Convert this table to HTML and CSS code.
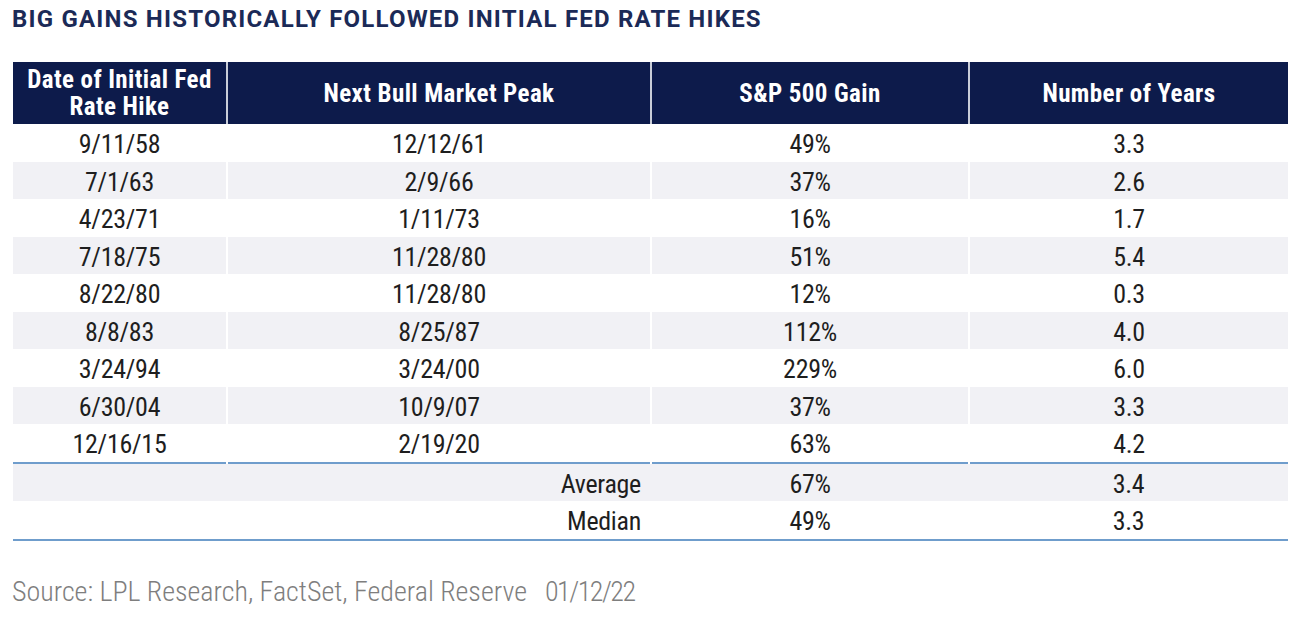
FILE: index.html
```html
<!DOCTYPE html>
<html>
<head>
<meta charset="utf-8">
<link rel="stylesheet" href="styles.css">
</head>
<body>
<div class="page">
  <h1 class="title">BIG GAINS HISTORICALLY FOLLOWED INITIAL FED RATE HIKES</h1>
  <table class="data">
    <colgroup>
      <col class="c1"><col class="c2"><col class="c3"><col class="c4">
    </colgroup>
    <thead>
      <tr>
        <th>Date of Initial Fed<br>Rate Hike</th>
        <th>Next Bull Market Peak</th>
        <th>S&amp;P 500 Gain</th>
        <th>Number of Years</th>
      </tr>
    </thead>
    <tbody>
      <tr><td>9/11/58</td><td>12/12/61</td><td>49%</td><td>3.3</td></tr>
      <tr class="alt"><td>7/1/63</td><td>2/9/66</td><td>37%</td><td>2.6</td></tr>
      <tr><td>4/23/71</td><td>1/11/73</td><td>16%</td><td>1.7</td></tr>
      <tr class="alt"><td>7/18/75</td><td>11/28/80</td><td>51%</td><td>5.4</td></tr>
      <tr><td>8/22/80</td><td>11/28/80</td><td>12%</td><td>0.3</td></tr>
      <tr class="alt"><td>8/8/83</td><td>8/25/87</td><td>112%</td><td>4.0</td></tr>
      <tr><td>3/24/94</td><td>3/24/00</td><td>229%</td><td>6.0</td></tr>
      <tr class="alt"><td>6/30/04</td><td>10/9/07</td><td>37%</td><td>3.3</td></tr>
      <tr><td>12/16/15</td><td>2/19/20</td><td>63%</td><td>4.2</td></tr>
    </tbody>
    <tfoot>
      <tr class="alt summary first"><td></td><td class="label">Average</td><td>67%</td><td>3.4</td></tr>
      <tr class="summary last"><td></td><td class="label">Median</td><td>49%</td><td>3.3</td></tr>
    </tfoot>
  </table>
  <p class="source">Source: LPL Research, FactSet, Federal Reserve<span class="date">01/12/22</span></p>
</div>
</body>
</html>
```

FILE: styles.css
```css
html, body {
  margin: 0;
  padding: 0;
  background: #ffffff;
}

.page {
  padding: 0 19px 0 13px;
  font-family: "Roboto", "Liberation Sans", sans-serif;
  font-stretch: 75%;
}

.title {
  margin: 0 0 0 -1px;
  padding-top: 5px;
  height: 62px;
  box-sizing: border-box;
  font-size: 24px;
  line-height: 28px;
  font-weight: 700;
  font-stretch: 100%;
  letter-spacing: 1.2px;
  color: #1b2a57;
}

.data {
  width: 1275px;
  border-collapse: collapse;
  table-layout: fixed;
}

.c1 { width: 214px; }
.c2 { width: 424px; }
.c3 { width: 318px; }
.c4 { width: 319px; }

.data th {
  height: 62px;
  padding: 0;
  background: #0d1b4b;
  color: #ffffff;
  font-size: 25px;
  font-weight: 700;
  letter-spacing: 0.4px;
  line-height: 27px;
  text-align: center;
  vertical-align: middle;
  border-right: 2px solid #c9cdd8;
}

.data th:last-child { border-right: none; }

.data td {
  height: 34.5px;
  padding: 3px 0 0;
  font-size: 26px;
  line-height: 30px;
  letter-spacing: -0.3px;
  color: #1e1e1e;
  text-align: center;
  vertical-align: middle;
  border-right: 2px solid #ffffff;
}

.data td:last-child { border-right: none; }

.data tr.alt td { background: #f1f1f5; }

.data tr.summary td { border-right: none; }

.data td.label {
  text-align: right;
  padding-right: 10px;
}

.data tr.first td { border-top: 2px solid #6f9dcc; }
.data tr.last td { border-bottom: 2px solid #6f9dcc; }

.source {
  margin: 36px 0 0 -1px;
  font-size: 28px;
  font-weight: 300;
  line-height: 30px;
  color: #7e7e7e;
}

.source .date {
  margin-left: 18px;
  letter-spacing: -1.5px;
}
```
